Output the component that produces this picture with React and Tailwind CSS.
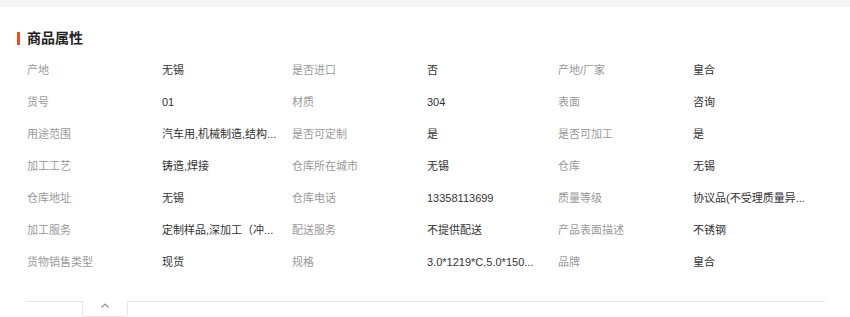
import React from 'react';

// 商品属性数据，每行三组；过长的值已截断
const attrs = [
  [['产地', '无锡'], ['是否进口', '否'], ['产地/厂家', '皇合']],
  [['货号', '01'], ['材质', '304'], ['表面', '咨询']],
  [['用途范围', '汽车用,机械制造,结构...'], ['是否可定制', '是'], ['是否可加工', '是']],
  [['加工工艺', '铸造,焊接'], ['仓库所在城市', '无锡'], ['仓库', '无锡']],
  [['仓库地址', '无锡'], ['仓库电话', '13358113699'], ['质量等级', '协议品(不受理质量异...']],
  [['加工服务', '定制样品,深加工（冲...'], ['配送服务', '不提供配送'], ['产品表面描述', '不锈钢']],
  [['货物销售类型', '现货'], ['规格', '3.0*1219*C,5.0*150...'], ['品牌', '皇合']],
];

const App = () => {
  return (
    <div
      className="w-[850px] h-[317px] bg-white overflow-hidden text-[11px]"
      style={{ fontFamily: '"Liberation Sans", "Noto Sans CJK SC", sans-serif' }}
    >
      <div className="h-[7px] bg-[#f5f5f5]" />

      {/* 标题 */}
      <div className="flex items-center h-[20px] mt-[21px] pl-[17px]">
        <span className="w-[3px] h-[13px] bg-[#ff4a0f]" />
        <h2 className="ml-[7px] text-[14px] font-bold text-[#222]">商品属性</h2>
      </div>

      {/* 属性表 */}
      <div className="mt-[6px] pl-[27px]">
        {attrs.map((row, i) => (
          <div
            key={i}
            className="grid grid-cols-[135px_130px_135px_131px_135px_131px] h-[32px] items-center"
          >
            {row.map(([label, value]) => (
              <React.Fragment key={label}>
                <span className="text-[#999] whitespace-nowrap">{label}</span>
                <span className="text-[#333] whitespace-nowrap">{value}</span>
              </React.Fragment>
            ))}
          </div>
        ))}
      </div>

      {/* 收起按钮 */}
      <div className="flex ml-[26px] w-[799px] mt-[23px]">
        <div className="w-[56px] border-t border-[#e5e5e5]" />
        <button className="w-[46px] h-[16px] border-x border-b border-[#e5e5e5] rounded-b-[4px] flex justify-center pt-[2px]">
          <svg width="8" height="5" viewBox="0 0 8 5" fill="none">
            <polyline points="0.5,4.5 4,1 7.5,4.5" stroke="#8a96a8" strokeWidth="1.2" />
          </svg>
        </button>
        <div className="flex-1 border-t border-[#e5e5e5]" />
      </div>
    </div>
  );
};

export default App;
